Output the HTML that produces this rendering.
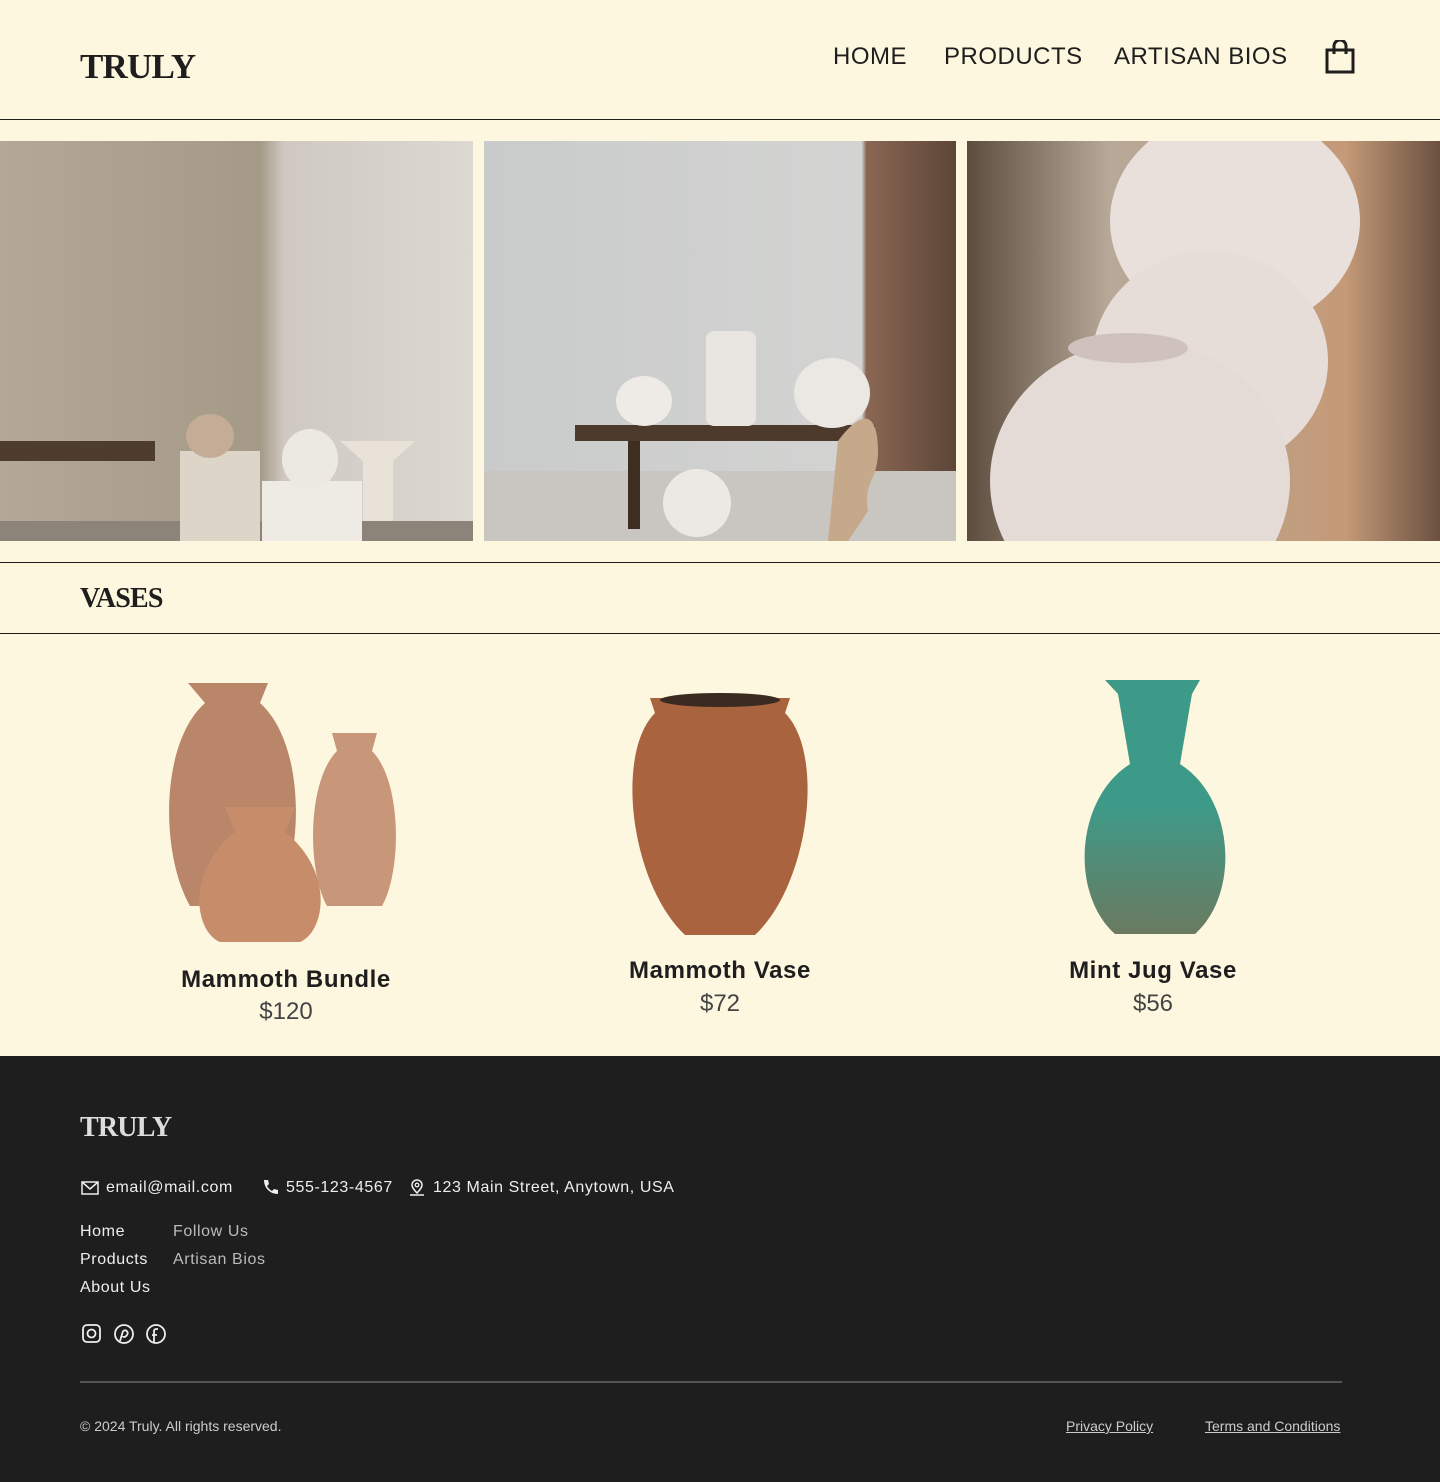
<!DOCTYPE html>
<html><head><meta charset="utf-8"><style>
*{margin:0;padding:0;box-sizing:border-box}
body{width:1440px;height:1482px;background:#fef7df;font-family:"Liberation Sans",sans-serif;color:#1e1e1e;position:relative;overflow:hidden}
.abs{position:absolute}
.logo{font-family:"Liberation Serif",serif;font-weight:bold;letter-spacing:-0.8px}
nav a{position:absolute;top:43px;font-size:24px;color:#1e1e1e;text-decoration:none;letter-spacing:0.5px}
.line{position:absolute;left:0;width:1440px;height:1px;background:#1e1e1e}
.pn{position:absolute;font-size:24px;font-weight:bold;text-align:center;width:400px;letter-spacing:0.6px}
.pp{position:absolute;font-size:24px;text-align:center;width:400px;color:#444}
footer{position:absolute;left:0;top:1056px;width:1440px;height:426px;background:#1e1e1e;color:#eee}
footer .t{position:absolute;font-size:16px;letter-spacing:0.6px}
</style></head><body>
<div class="abs logo" style="left:80px;top:47px;font-size:35px">TRULY</div>
<nav><a style="left:833px">HOME</a><a style="left:944px">PRODUCTS</a><a style="left:1114px">ARTISAN BIOS</a></nav>
<svg class="abs" style="left:1324px;top:40px" width="32" height="34" viewBox="0 0 32 34"><path d="M3 10h26v22H3z M10 14V6a6 6 0 0 1 12 0v8" fill="none" stroke="#1e1e1e" stroke-width="3"/></svg>
<div class="line" style="top:119px"></div>

<svg class="abs" style="left:0;top:141px" width="1440" height="400">
<defs>
<linearGradient id="g1" x1="0" x2="1"><stop offset="0" stop-color="#b3a797"/><stop offset="0.55" stop-color="#a59987"/><stop offset="0.6" stop-color="#cfc9c2"/><stop offset="1" stop-color="#ddd8d2"/></linearGradient>
<linearGradient id="g2" x1="0" x2="1"><stop offset="0" stop-color="#c9cbcb"/><stop offset="0.8" stop-color="#d3d4d2"/><stop offset="0.81" stop-color="#8a6753"/><stop offset="1" stop-color="#5c4538"/></linearGradient>
<linearGradient id="g3" x1="0" x2="1"><stop offset="0" stop-color="#5c4d3e"/><stop offset="0.3" stop-color="#b8a898"/><stop offset="0.8" stop-color="#c49a78"/><stop offset="1" stop-color="#6b5040"/></linearGradient>
<linearGradient id="jg" x1="0" y1="0" x2="0" y2="1"><stop offset="0.5" stop-color="#3e9a88"/><stop offset="1" stop-color="#6a7a60"/></linearGradient>
</defs>
<rect x="0" width="473" height="400" fill="url(#g1)"/>
<rect x="0" y="300" width="155" height="20" fill="#4e3c2e"/><rect x="0" y="380" width="473" height="20" fill="#8c8478"/>
<rect x="180" y="310" width="80" height="90" fill="#ddd5c8"/><rect x="262" y="340" width="100" height="60" fill="#eeeae4"/>
<ellipse cx="310" cy="318" rx="28" ry="30" fill="#ece8e2"/><ellipse cx="210" cy="295" rx="24" ry="22" fill="#c4ad96"/>
<path d="M340 300h75l-22 20v60h-30v-60z" fill="#e8e2d8"/>
<rect x="484" width="472" height="400" fill="url(#g2)"/>
<rect x="484" y="330" width="472" height="70" fill="#c9c5c0"/>
<rect x="575" y="284" width="300" height="16" fill="#4d3a2c"/><rect x="628" y="300" width="12" height="88" fill="#3e2e22"/>
<ellipse cx="644" cy="260" rx="28" ry="25" fill="#eeebe6"/><rect x="706" y="190" width="50" height="95" rx="8" fill="#e9e6e1"/>
<ellipse cx="832" cy="252" rx="38" ry="35" fill="#ebe8e3"/><ellipse cx="697" cy="362" rx="34" ry="34" fill="#ece9e4"/>
<path d="M838 300c30-40 40-20 40 10s-15 30-10 60l-20 30h-20z" fill="#c6a88a"/>
<rect x="967" width="473" height="400" fill="url(#g3)"/>
<ellipse cx="1235" cy="80" rx="125" ry="110" fill="#e9e0dc"/>
<ellipse cx="1210" cy="220" rx="118" ry="110" fill="#e6ddd8"/>
<ellipse cx="1140" cy="340" rx="150" ry="140" fill="#e4dbd7"/>
<ellipse cx="1128" cy="207" rx="60" ry="15" fill="#cfc2bc"/>
</svg>

<div class="line" style="top:562px"></div>
<div class="abs logo" style="left:80px;top:583px;font-size:28px">VASES</div>
<div class="line" style="top:633px"></div>

<svg class="abs" style="left:150px;top:675px" width="280" height="275">
<path d="M38 8h80l-8 20c45 40 45 150 15 203h-85c-30-53-30-163 15-203z" fill="#b9866a"/>
<path d="M182 58h45l-5 18c30 30 30 120 10 155h-55c-20-35-20-125 10-155z" fill="#c89679"/>
<path d="M75 132h70l-10 25c50 40 40 100 15 110h-80c-25-10-35-70 15-110z" fill="#c78d6b"/>
</svg>
<div class="pn" style="left:86px;top:966px">Mammoth Bundle</div>
<div class="pp" style="left:86px;top:998px">$120</div>

<svg class="abs" style="left:630px;top:690px" width="180" height="250">
<path d="M20 8h140l-5 15c40 40 25 170-30 222h-70c-55-52-70-182-30-222z" fill="#a9633f"/>
<ellipse cx="90" cy="10" rx="60" ry="7" fill="#3a2a20"/>
</svg>
<div class="pn" style="left:520px;top:957px">Mammoth Vase</div>
<div class="pp" style="left:520px;top:990px">$72</div>

<svg class="abs" style="left:1065px;top:678px" width="180" height="272">
<path d="M40 2h95l-8 14-12 70c55 35 60 130 15 170h-80c-45-40-40-135 15-170l-12-70z" fill="url(#jg)"/>
</svg>
<div class="pn" style="left:953px;top:957px">Mint Jug Vase</div>
<div class="pp" style="left:953px;top:990px">$56</div>

<footer>
<div class="abs logo" style="left:80px;top:56px;font-size:28px;color:#ddd">TRULY</div>
<svg class="abs" style="left:81px;top:125px" width="18" height="14"><rect x="1" y="1" width="16" height="12" fill="none" stroke="#eee" stroke-width="1.5"/><path d="M1 1l8 7 8-7" fill="none" stroke="#eee" stroke-width="1.5"/></svg>
<div class="t" style="left:106px;top:123px">email@mail.com</div>
<svg class="abs" style="left:262px;top:123px" width="16" height="16"><path d="M2 1l4 0 1 4-2 2c1 2 3 4 5 5l2-2 4 1v4c-8 0-14-6-14-14z" fill="#eee"/></svg>
<div class="t" style="left:286px;top:123px">555-123-4567</div>
<svg class="abs" style="left:408px;top:122px" width="18" height="18"><path d="M9 2a5 5 0 0 1 5 5c0 3-5 8-5 8s-5-5-5-8a5 5 0 0 1 5-5z M2 17h14" fill="none" stroke="#eee" stroke-width="1.5"/><circle cx="9" cy="7" r="1.8" fill="none" stroke="#eee" stroke-width="1.3"/></svg>
<div class="t" style="left:433px;top:123px">123 Main Street, Anytown, USA</div>
<div class="t" style="left:80px;top:167px">Home</div>
<div class="t" style="left:80px;top:195px">Products</div>
<div class="t" style="left:80px;top:223px">About Us</div>
<div class="t" style="left:173px;top:167px;color:#bbb">Follow Us</div>
<div class="t" style="left:173px;top:195px;color:#bbb">Artisan Bios</div>
<svg class="abs" style="left:81px;top:267px" width="90" height="22" fill="none" stroke="#eee" stroke-width="1.8">
<rect x="2" y="2" width="17" height="17" rx="4"/><circle cx="10.5" cy="10.5" r="4"/>
<circle cx="43" cy="11" r="9"/><path d="M42 8c3-2 6 1 4 4s-4 2-4 1M42 8l-3 10"/>
<circle cx="75" cy="11" r="9"/><path d="M77 6h-2a2 2 0 0 0-2 2v12M71 12h5"/>
</svg>
<div class="abs" style="left:80px;top:325px;width:1262px;height:2px;background:#555"></div>
<div class="abs" style="left:80px;top:362px;font-size:14px;color:#ccc">© 2024 Truly. All rights reserved.</div>
<div class="abs" style="left:1066px;top:362px;font-size:14px;color:#ccc;text-decoration:underline">Privacy Policy</div>
<div class="abs" style="left:1205px;top:362px;font-size:14px;color:#ccc;text-decoration:underline">Terms and Conditions</div>
</footer>
</body></html>
